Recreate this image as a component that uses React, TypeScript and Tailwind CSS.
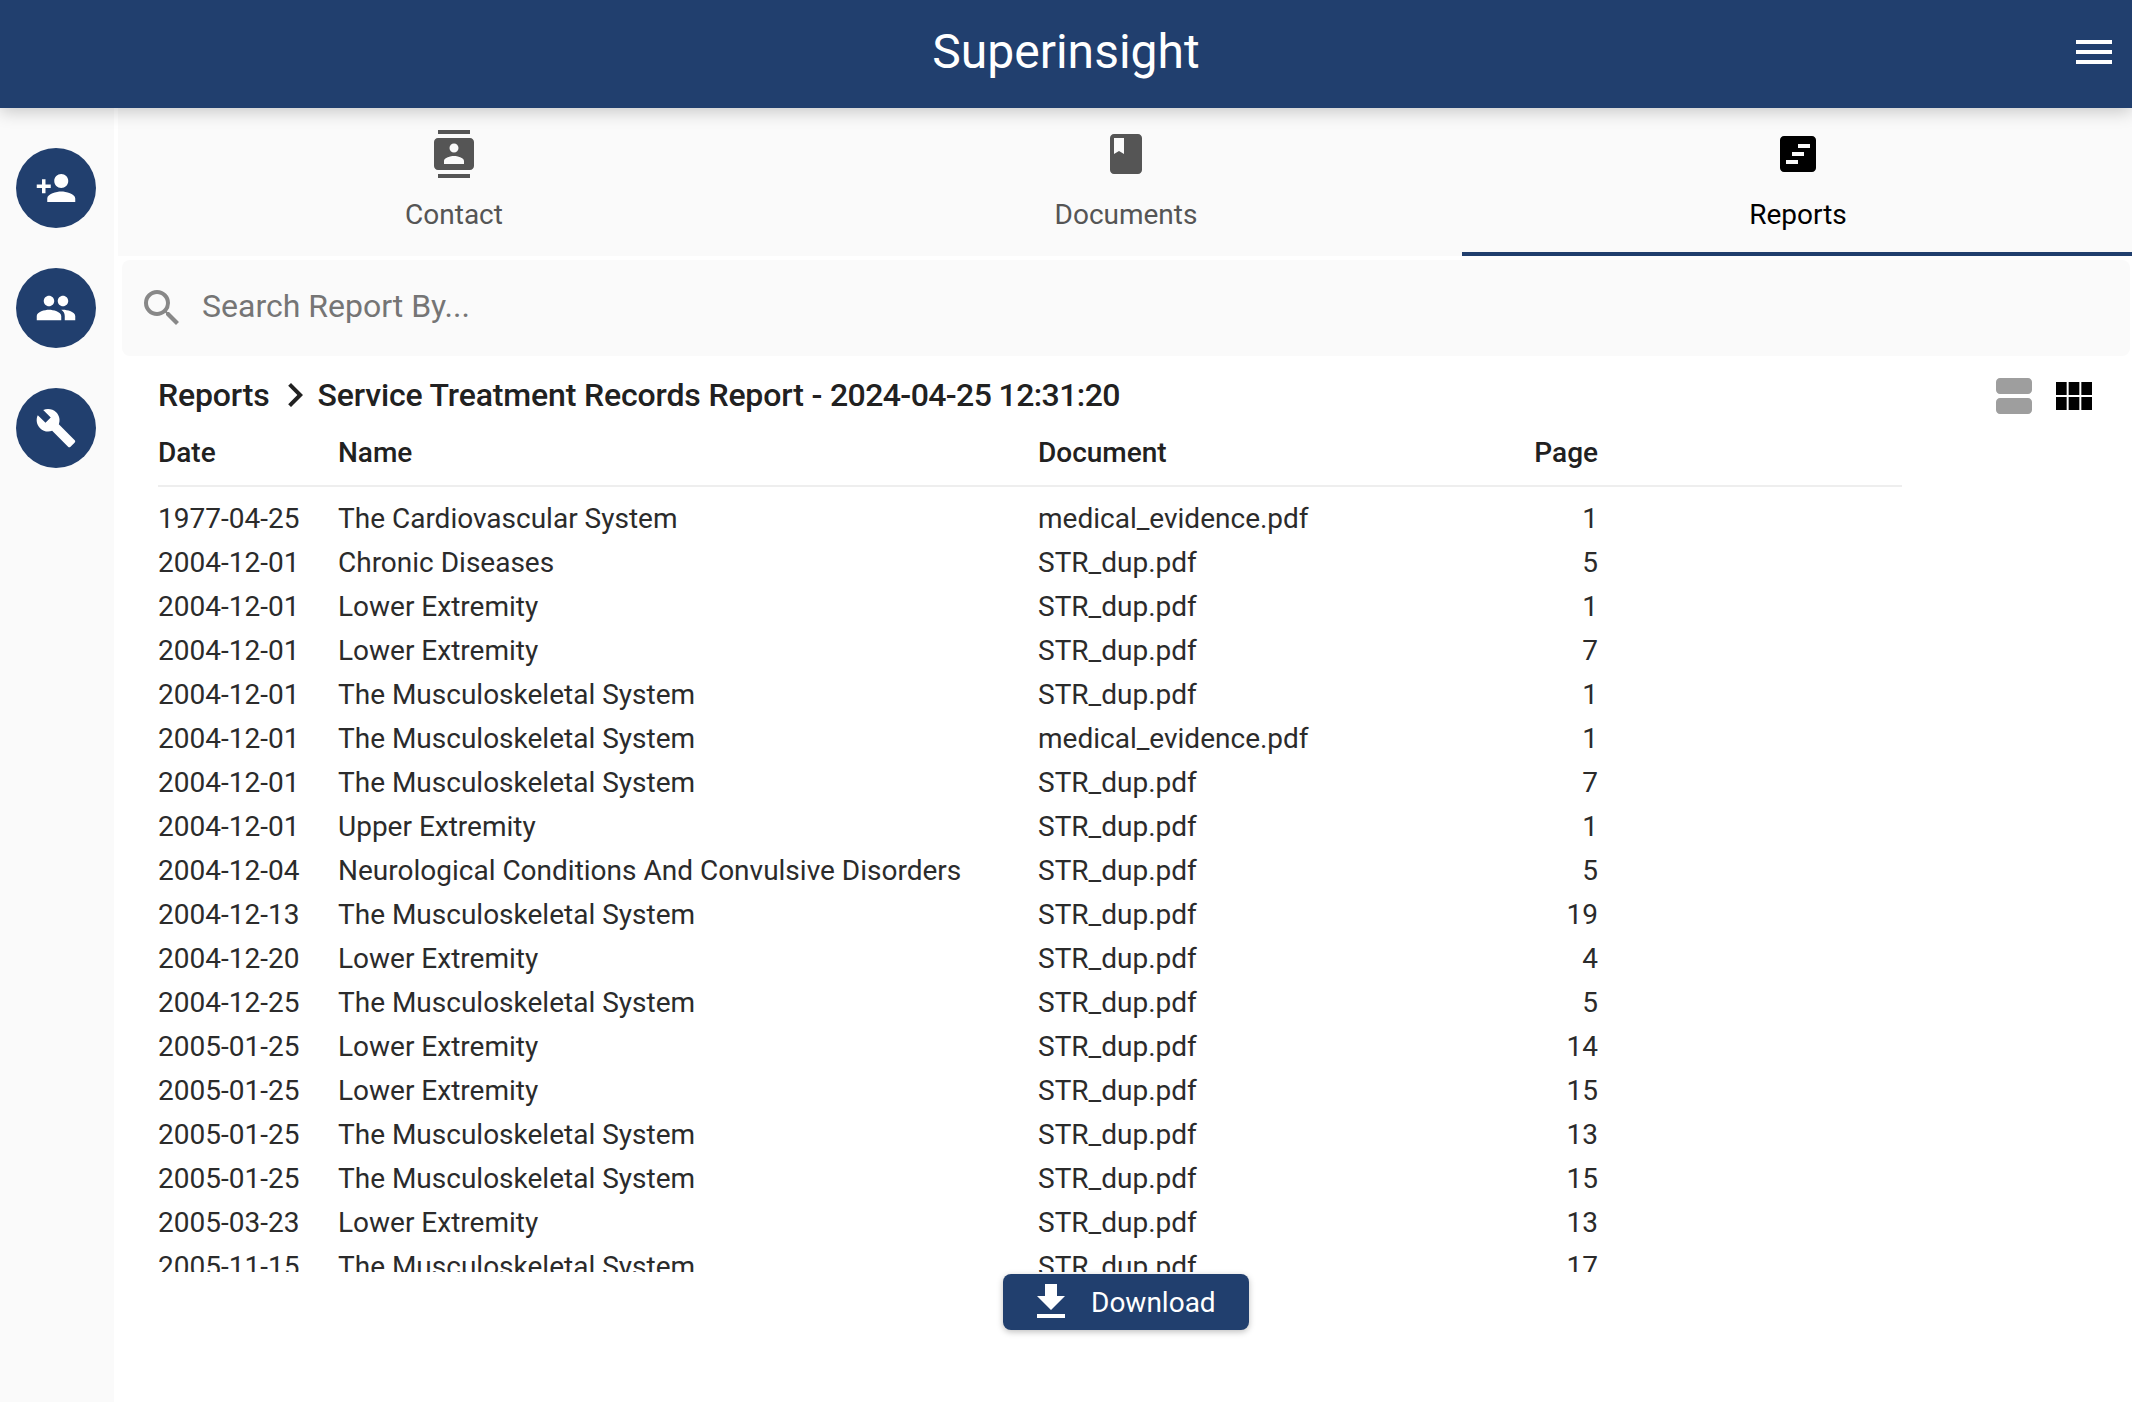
import React from 'react';
import { MdPersonAdd, MdPeople, MdBuild, MdSearch, MdMenu, MdContacts, MdBook, MdFileDownload, MdChevronRight } from 'react-icons/md';

const ROWS: [string, string, string, number][] = [
  ['1977-04-25', 'The Cardiovascular System', 'medical_evidence.pdf', 1],
  ['2004-12-01', 'Chronic Diseases', 'STR_dup.pdf', 5],
  ['2004-12-01', 'Lower Extremity', 'STR_dup.pdf', 1],
  ['2004-12-01', 'Lower Extremity', 'STR_dup.pdf', 7],
  ['2004-12-01', 'The Musculoskeletal System', 'STR_dup.pdf', 1],
  ['2004-12-01', 'The Musculoskeletal System', 'medical_evidence.pdf', 1],
  ['2004-12-01', 'The Musculoskeletal System', 'STR_dup.pdf', 7],
  ['2004-12-01', 'Upper Extremity', 'STR_dup.pdf', 1],
  ['2004-12-04', 'Neurological Conditions And Convulsive Disorders', 'STR_dup.pdf', 5],
  ['2004-12-13', 'The Musculoskeletal System', 'STR_dup.pdf', 19],
  ['2004-12-20', 'Lower Extremity', 'STR_dup.pdf', 4],
  ['2004-12-25', 'The Musculoskeletal System', 'STR_dup.pdf', 5],
  ['2005-01-25', 'Lower Extremity', 'STR_dup.pdf', 14],
  ['2005-01-25', 'Lower Extremity', 'STR_dup.pdf', 15],
  ['2005-01-25', 'The Musculoskeletal System', 'STR_dup.pdf', 13],
  ['2005-01-25', 'The Musculoskeletal System', 'STR_dup.pdf', 15],
  ['2005-03-23', 'Lower Extremity', 'STR_dup.pdf', 13],
  ['2005-11-15', 'The Musculoskeletal System', 'STR_dup.pdf', 17],
];

const ReportsIcon = () => (
  <svg viewBox="0 0 24 24" className="w-12 h-12" fill="currentColor">
    <path
      fillRule="evenodd"
      d="M5 3h14c1.1 0 2 .9 2 2v14c0 1.1-.9 2-2 2H5c-1.1 0-2-.9-2-2V5c0-1.1.9-2 2-2zm7 4v2h6V7h-6zM9 11v2h6v-2H9zm-3 4v2h6v-2H6z"
    />
  </svg>
);

const AgendaIcon = () => (
  <svg viewBox="0 0 24 24" className="w-12 h-12 text-[#9e9e9e]" fill="currentColor">
    <path d="M5 3h14c1.1 0 2 .9 2 2v4c0 1.1-.9 2-2 2H5c-1.1 0-2-.9-2-2V5c0-1.1.9-2 2-2zm0 10h14c1.1 0 2 .9 2 2v4c0 1.1-.9 2-2 2H5c-1.1 0-2-.9-2-2v-4c0-1.1.9-2 2-2z" />
  </svg>
);

const ModuleIcon = () => (
  <svg viewBox="0 0 24 24" className="w-12 h-12 text-black" fill="currentColor">
    <path d="M14.67 5v6.5H9.33V5h5.34zm1 6.5H21V5h-5.33v6.5zm-1 7.5v-6.5H9.33V19h5.34zm1-6.5V19H21v-6.5h-5.33zm-7.34 0H3V19h5.33v-6.5zm0-1V5H3v6.5h5.33z" />
  </svg>
);

const SideButton = ({ children }: { children: React.ReactNode }) => (
  <button className="w-20 h-20 rounded-full bg-[#213f6e] text-white flex items-center justify-center">{children}</button>
);

const Tab = ({ icon, label, active }: { icon: React.ReactNode; label: string; active?: boolean }) => (
  <div className={`flex flex-col items-center pt-[22px] ${active ? 'text-black border-b-4 border-[#213f6e]' : 'text-[#555555]'}`}>
    {icon}
    <span className="mt-[21px] text-[28px] leading-8">{label}</span>
  </div>
);

const COLS = 'grid grid-cols-[180px_700px_400px_160px]';

export default function App() {
  return (
    <div className="h-[1402px] flex flex-col overflow-hidden bg-white text-[#212121] font-['Roboto',sans-serif]">
      {/* Top bar */}
      <header className="relative z-10 h-[108px] shrink-0 bg-[#213f6e] flex items-center justify-center shadow-[0_4px_16px_rgba(0,0,0,0.2)]">
        <h1 className="text-[48px] leading-none text-white mb-1">Superinsight</h1>
        <MdMenu className="absolute right-[14px] top-[28px] w-12 h-12 text-white" />
      </header>

      <div className="flex flex-1 min-h-0">
        {/* Side actions */}
        <aside className="w-[114px] shrink-0 bg-[#fafafa] flex flex-col gap-10 pt-10 pl-4">
          <SideButton><MdPersonAdd className="w-[42px] h-[42px]" /></SideButton>
          <SideButton><MdPeople className="w-[42px] h-[42px]" /></SideButton>
          <SideButton><MdBuild className="w-[42px] h-[42px]" /></SideButton>
        </aside>

        <main className="flex-1 min-w-0 pl-1 flex flex-col overflow-hidden">
          <nav className="h-[148px] shrink-0 grid grid-cols-[672px_672px_672px] bg-[#fafafa]">
            <Tab icon={<MdContacts className="w-12 h-12" />} label="Contact" />
            <Tab icon={<MdBook className="w-12 h-12" />} label="Documents" />
            <Tab icon={<ReportsIcon />} label="Reports" active />
          </nav>

          {/* Search */}
          <div className="mt-1 ml-1 mr-0.5 h-24 shrink-0 rounded-lg bg-[#fafafa] flex items-center pl-4">
            <MdSearch className="w-12 h-12 text-[#888888]" />
            <span className="ml-4 mb-[5px] text-[32px] text-[#757575]">Search Report By...</span>
          </div>

          {/* Breadcrumb */}
          <div className="mt-[15px] pl-10 pr-[34px] h-12 shrink-0 flex items-center font-medium text-[32px] tracking-[-0.15px] text-[#212121]">
            <span>Reports</span>
            <MdChevronRight className="w-12 h-12 ml-px mr-[-1px]" />
            <span>
              Service Treatment Records Report - <span className="tracking-[-0.6px]">2024-04-25 12:31:20</span>
            </span>
            <div className="ml-auto mt-0.5 flex gap-3">
              <AgendaIcon />
              <ModuleIcon />
            </div>
          </div>

          {/* Table */}
          <div className="ml-10 w-[1744px]">
            <div className={`${COLS} mt-3 h-14 border-b-2 border-[#eeeeee] font-medium text-[28px] leading-[44px]`}>
              <span>Date</span>
              <span>Name</span>
              <span>Document</span>
              <span className="text-right">Page</span>
            </div>
            <div className="mt-[10px] h-[775px] overflow-hidden text-[28px] leading-[44px] text-[#2b2b2b]">
              {ROWS.map((r, i) => (
                <div key={i} className={COLS}>
                  <span>{r[0]}</span>
                  <span>{r[1]}</span>
                  <span>{r[2]}</span>
                  <span className="text-right">{r[3]}</span>
                </div>
              ))}
            </div>
          </div>

          <div className="mt-0.5 pl-0.5 flex justify-center">
            <button className="w-[246px] h-14 rounded-lg bg-[#213f6e] text-white flex items-center pl-6 text-[28px] shadow-[0_2px_6px_rgba(0,0,0,0.25)]">
              <MdFileDownload className="w-12 h-12" />
              <span className="ml-4 mt-0.5">Download</span>
            </button>
          </div>
        </main>
      </div>
    </div>
  );
}
